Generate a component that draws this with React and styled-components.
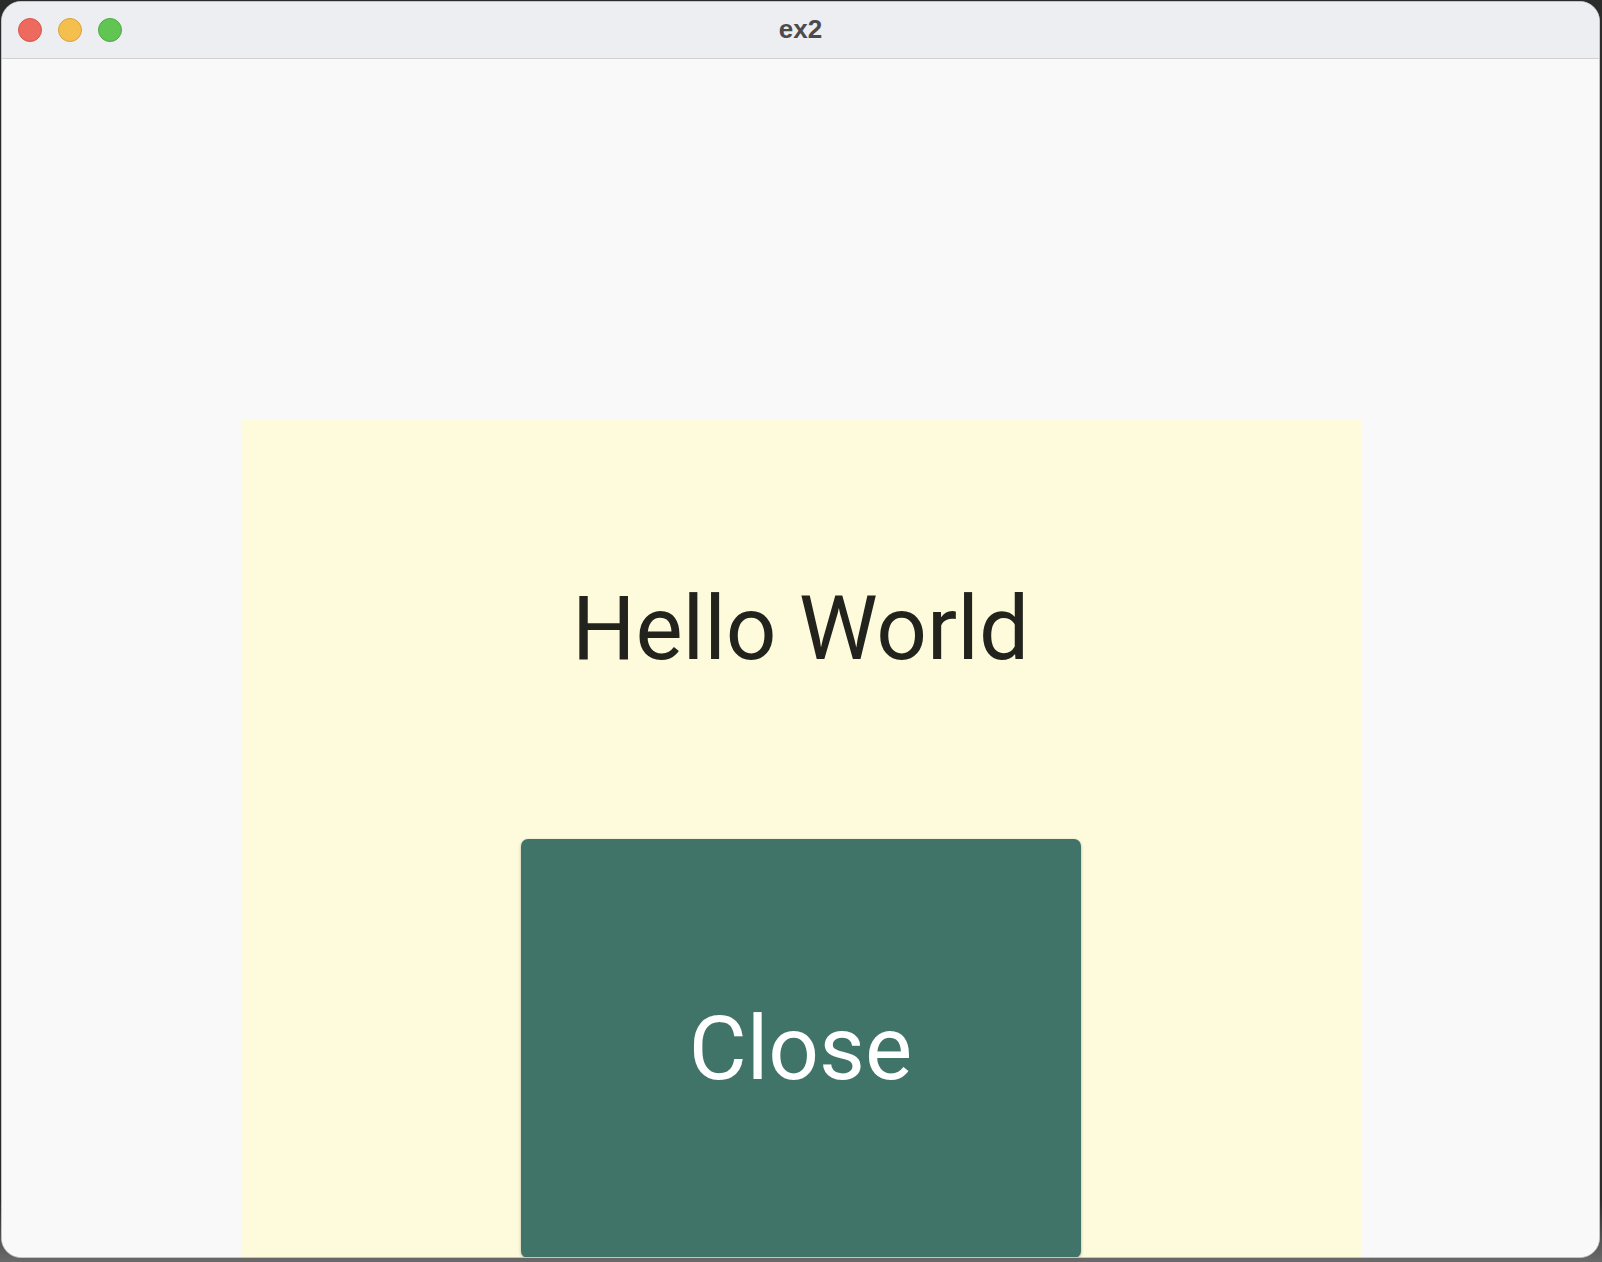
import React from "react";
import styled, { createGlobalStyle } from "styled-components";

const GlobalStyle = createGlobalStyle`
	html, body {
		margin: 0;
		padding: 0;
		background: #2b2b2b;
		overflow: hidden;
	}
`;

const Desktop = styled.div`
	width: 1602px;
	height: 1262px;
	box-sizing: border-box;
	padding: 1px 2px 4px 1px;
	background: linear-gradient(to bottom, #2b2b2b 0%, #2b2b2b 95%, #6a6a6a 100%);
`;

const Window = styled.div`
	height: 100%;
	display: flex;
	flex-direction: column;
	border: 1px solid #c4c4c6;
	border-radius: 20px;
	overflow: hidden;
	background: #f9f9fa;
	box-sizing: border-box;
`;

const TitleBar = styled.div`
	height: 56px;
	flex-shrink: 0;
	display: grid;
	grid-template-columns: 1fr auto 1fr;
	align-items: center;
	background: #edeef1;
	border-bottom: 1px solid #d2d2d4;
`;

const Lights = styled.div`
	display: flex;
	gap: 16px;
	padding-left: 16px;
`;

const Light = styled.span`
	width: 24px;
	height: 24px;
	border-radius: 50%;
	box-sizing: border-box;
	background: ${(p) => p.color};
	border: 1px solid ${(p) => p.edge};
`;

const Title = styled.div`
	font-family: "Liberation Sans", Arial, sans-serif;
	font-weight: 700;
	font-size: 26px;
	color: #4b4b4d;
	margin-top: -2px;
`;

const Content = styled.div`
	flex: 1;
	min-height: 0;
	background: #f9f9fa;
	padding-top: 360px;
`;

const Panel = styled.div`
	width: 1120px;
	margin: 0 auto;
	background: #fdfbdc;
	display: flex;
	flex-direction: column;
	align-items: center;
	padding: 166px 0 40px;
	gap: 166px;
`;

const Greeting = styled.div`
	font-family: Roboto, "Liberation Sans", sans-serif;
	font-size: 89px;
	line-height: 88px;
	color: #23231d;
`;

const CloseButton = styled.button`
	width: 560px;
	height: 419px;
	border: none;
	border-radius: 7px;
	background: #417469;
	color: #ffffff;
	font-family: Roboto, "Liberation Sans", sans-serif;
	font-size: 89px;
	display: flex;
	align-items: center;
	justify-content: center;
	box-shadow: 0 1px 3px rgba(0, 0, 0, 0.3);
	cursor: pointer;
`;

export default function App() {
	return (
		<>
			<GlobalStyle />
			<Desktop>
				<Window>
					<TitleBar>
						<Lights>
							<Light color="#ee6a5f" edge="#d6554a" />
							<Light color="#f5bf4f" edge="#d9a23a" />
							<Light color="#61c554" edge="#4ea942" />
						</Lights>
						<Title>ex2</Title>
						<div />
					</TitleBar>
					<Content>
						<Panel>
							<Greeting>Hello World</Greeting>
							<CloseButton>Close</CloseButton>
						</Panel>
					</Content>
				</Window>
			</Desktop>
		</>
	);
}
